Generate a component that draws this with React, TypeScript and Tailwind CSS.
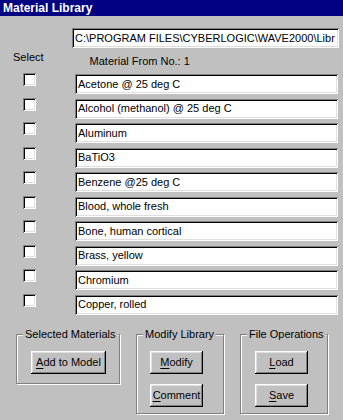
import React from 'react';

const materials = [
  'Acetone @ 25 deg C',
  'Alcohol (methanol) @ 25 deg C',
  'Aluminum',
  'BaTiO3',
  'Benzene @25 deg C',
  'Blood, whole fresh',
  'Bone, human cortical',
  'Brass, yellow',
  'Chromium',
  'Copper, rolled',
];

const sunken =
  'bg-white shadow-[inset_1px_1px_0_#808080,inset_-1px_-1px_0_#ffffff,inset_2px_2px_0_#000000,inset_-2px_-2px_0_#dfdfdf]';

const raised =
  'bg-[#c0c0c0] shadow-[inset_-1px_-1px_0_#000000,inset_1px_1px_0_#ffffff,inset_-2px_-2px_0_#808080,inset_2px_2px_0_#dfdfdf]';

interface WinButtonProps {
  accel: string;
  rest: string;
  width: string;
}

const WinButton: React.FC<WinButtonProps> = ({ accel, rest, width }) => (
  <button className={`${raised} ${width} h-[23px] flex items-center justify-center text-[11px] text-black`}>
    <span>
      <span className="underline underline-offset-2">{accel}</span>
      {rest}
    </span>
  </button>
);

interface GroupBoxProps {
  label: string;
  className: string;
  children: React.ReactNode;
}

const GroupBox: React.FC<GroupBoxProps> = ({ label, className, children }) => (
  <div
    className={`relative border border-[#808080] shadow-[1px_1px_0_#ffffff,inset_1px_1px_0_#ffffff] ${className}`}
  >
    <span className="absolute -top-[8px] left-[6px] px-[2px] bg-[#c0c0c0] text-[11px] leading-[14px] text-black whitespace-nowrap">
      {label}
    </span>
    {children}
  </div>
);

export default function App() {
  return (
    <div
      className="w-[343px] h-[420px] bg-[#c0c0c0] flex flex-col overflow-hidden text-black"
      style={{ fontFamily: '"Liberation Sans", Arial, sans-serif' }}
    >
      {/* title bar */}
      <div className="h-[16px] bg-[#000080] flex items-center pl-[3px]">
        <span className="text-white font-bold text-[12px] leading-[16px]">Material Library</span>
      </div>

      {/* library path */}
      <div className={`${sunken} ml-[72px] mt-[12px] w-[267px] h-[20px] pl-[3px] flex items-center overflow-hidden`}>
        <span className="text-[11px] whitespace-nowrap">C:\PROGRAM FILES\CYBERLOGIC\WAVE2000\Libr</span>
      </div>

      {/* header */}
      <div className="h-[26px] flex items-start">
        <span className="ml-[13px] mt-[2px] text-[11px] leading-[14px]">Select</span>
        <span className="ml-[46px] mt-[6px] text-[11px] leading-[14px]">Material From No.: 1</span>
      </div>

      {/* material rows */}
      <div className="flex flex-col gap-[4.5px]">
        {materials.map((m) => (
          <div key={m} className="flex items-start h-[20px]">
            <div className={`${sunken} ml-[23px] -mt-[1px] w-[13px] h-[13px]`} />
            <div className={`${sunken} ml-[39px] w-[263px] h-[20px] pl-[3px] flex items-center`}>
              <span className="text-[11px] whitespace-nowrap">{m}</span>
            </div>
          </div>
        ))}
      </div>

      {/* group boxes */}
      <div className="flex items-start mt-[19px] ml-[16px] gap-[16px]">
        <GroupBox label="Selected Materials" className="w-[104px] h-[50px] pt-[16px] pl-[14px]">
          <WinButton accel="A" rest="dd to Model" width="w-[75px]" />
        </GroupBox>
        <GroupBox label="Modify Library" className="w-[88px] h-[80px] pt-[16px] pl-[13px] flex flex-col gap-[10px]">
          <WinButton accel="M" rest="odify" width="w-[53px]" />
          <WinButton accel="C" rest="omment" width="w-[53px]" />
        </GroupBox>
        <GroupBox label="File Operations" className="w-[88px] h-[80px] pt-[16px] pl-[14px] flex flex-col gap-[10px]">
          <WinButton accel="L" rest="oad" width="w-[53px]" />
          <WinButton accel="S" rest="ave" width="w-[53px]" />
        </GroupBox>
      </div>
    </div>
  );
}
